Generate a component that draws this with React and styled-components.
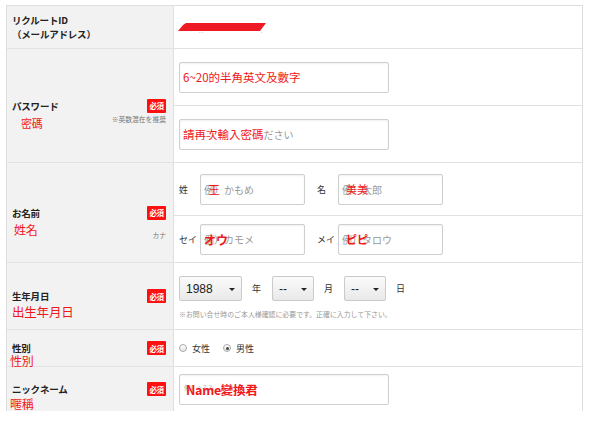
import React from 'react';
import styled, { createGlobalStyle } from 'styled-components';

const GlobalStyle = createGlobalStyle`
  html, body {
    margin: 0;
    padding: 0;
    background: #fff;
  }
  body {
    font-family: "Noto Sans CJK JP", "Noto Sans", sans-serif;
    color: #222;
  }
`;

const RED = '#f01818';

const Page = styled.div`
  width: 599px;
  height: 432px;
  padding: 5px 0 0 6px;
  box-sizing: border-box;
  overflow: hidden;
`;

const Table = styled.div`
  width: 577px;
  border: 1px solid #dedede;
  border-bottom: none;
  box-sizing: border-box;
`;

const Row = styled.div`
  display: grid;
  grid-template-columns: 167px 1fr;
  border-top: ${p => (p.first ? 'none' : '1px solid #e2e2e2')};
`;

const LabelCell = styled.div`
  display: flex;
  align-items: center;
  padding: 0 7px 0 5px;
  background: #f2f2f2;
  border-right: 1px solid #e0e0e0;
  min-height: ${p => p.h}px;
`;

const Title = styled.div`
  position: relative;
  flex: 1;
  font-size: 9.5px;
  font-weight: 700;
  line-height: 14px;
  color: #222;
  letter-spacing: -0.2px;
`;

const Annotation = styled.span`
  position: absolute;
  left: ${p => p.x}px;
  top: ${p => p.y}px;
  font-family: "Noto Sans CJK TC", "Noto Sans CJK JP", sans-serif;
  font-size: ${p => p.size || 12}px;
  font-weight: ${p => (p.bold ? 700 : 400)};
  color: ${RED};
  white-space: nowrap;
  line-height: 1;
`;

const BadgeWrap = styled.div`
  position: relative;
  display: flex;
  flex-direction: column;
  align-items: flex-end;
`;

const Badge = styled.span`
  display: inline-flex;
  align-items: center;
  justify-content: center;
  width: 19px;
  height: 14px;
  background: #ff1010;
  border-radius: 1px;
  color: #fff;
  font-size: 7.5px;
  font-weight: 700;
  letter-spacing: -0.5px;
`;

const Note = styled.span`
  position: absolute;
  right: 0;
  top: ${p => p.y}px;
  font-size: 6.8px;
  line-height: 10px;
  color: #777;
  white-space: nowrap;
`;

const ValueCell = styled.div`
  display: flex;
  flex-direction: column;
  background: #fff;
`;

const SubRow = styled.div`
  display: flex;
  align-items: center;
  height: ${p => p.h}px;
  padding-left: 5px;
  border-top: ${p => (p.divided ? '1px solid #e2e2e2' : 'none')};
`;

const FieldBox = styled.div`
  position: relative;
  display: flex;
  align-items: center;
  width: ${p => p.w}px;
  height: 31px;
  box-sizing: border-box;
  padding-left: 3px;
  border: 1px solid #cfcfcf;
  border-radius: 2px;
  box-shadow: inset 0 1px 2px rgba(0, 0, 0, 0.06);
  background: #fff;
  overflow: hidden;
`;

const Placeholder = styled.span`
  font-size: ${p => p.size || 10}px;
  color: #999;
  white-space: nowrap;
  margin-left: ${p => p.ml || 0}px;
`;

const TinyHint = styled.span`
  position: absolute;
  left: 4px;
  top: 8px;
  font-size: 6px;
  color: #aaa;
  white-space: nowrap;
`;

const FieldText = styled.span`
  position: relative;
  font-family: "Noto Sans CJK TC", "Noto Sans CJK JP", sans-serif;
  font-size: ${p => p.size || 12}px;
  font-weight: ${p => (p.bold ? 700 : 400)};
  color: ${RED};
  white-space: nowrap;
  letter-spacing: ${p => p.ls || 0}px;
  margin-left: ${p => p.ml || 0}px;
`;

const InlineLabel = styled.span`
  display: inline-block;
  width: ${p => p.w}px;
  font-size: 9px;
  color: #333;
`;

const NameGroup = styled.div`
  display: flex;
  align-items: center;
  margin-right: 12px;
`;

const Redact = styled.svg`
  display: block;
  margin-left: -2px;
`;

const BirthBlock = styled.div`
  display: flex;
  flex-direction: column;
  padding: 13px 0 0 5px;
  height: 66px;
  box-sizing: border-box;
`;

const SelectRow = styled.div`
  display: flex;
  align-items: center;
`;

const SelectBox = styled.div`
  position: relative;
  display: flex;
  align-items: center;
  width: ${p => p.w}px;
  height: 25px;
  box-sizing: border-box;
  padding-left: 6px;
  border: 1px solid #cacaca;
  border-radius: 2px;
  background: linear-gradient(#fbfbfb, #e9e9e9);
  font-family: "Liberation Sans", Arial, sans-serif;
  font-size: 12px;
  color: #222;

  &::after {
    content: '';
    position: absolute;
    right: 6px;
    top: 11px;
    border-left: 3px solid transparent;
    border-right: 3px solid transparent;
    border-top: 3px solid #222;
  }
`;

const Unit = styled.span`
  font-size: 9px;
  color: #333;
  margin: 0 11px 0 10px;
`;

const SmallNote = styled.div`
  margin-top: 8px;
  font-size: 6.9px;
  color: #999;
  white-space: nowrap;
`;

const RadioOption = styled.label`
  display: inline-flex;
  align-items: center;
  margin-right: 13px;
  font-size: 9px;
  color: #333;
`;

const RadioDot = styled.span`
  position: relative;
  width: 8px;
  height: 8px;
  box-sizing: border-box;
  margin-right: 5px;
  border: 1px solid #aaa;
  border-radius: 50%;
  background: linear-gradient(#fff, #e4e4e4);

  &::after {
    content: '';
    display: ${p => (p.checked ? 'block' : 'none')};
    position: absolute;
    left: 1.5px;
    top: 1.5px;
    width: 3px;
    height: 3px;
    border-radius: 50%;
    background: #444;
  }
`;

const Badged = ({ note, noteY }) => (
  <BadgeWrap>
    <Badge>必須</Badge>
    {note && <Note y={noteY}>{note}</Note>}
  </BadgeWrap>
);

const App = () => (
  <>
    <GlobalStyle />
    <Page>
      <Table>
        <Row first>
          <LabelCell h={42}>
            <Title>
              リクルートID
              <br />
              （メールアドレス）
            </Title>
          </LabelCell>
          <ValueCell>
            <SubRow h={42}>
              <Redact width="92" height="14" viewBox="0 0 92 14">
                <text x="22" y="13" fontSize="5" fill="#9aa">. .</text>
                <text x="84" y="13" fontSize="5" fill="#9aa">.</text>
                <polygon points="1,11 6,5 9,3 89,3 83,11" fill="#ee1b24" />
              </Redact>
            </SubRow>
          </ValueCell>
        </Row>

        <Row>
          <LabelCell h={113}>
            <Title>
              パスワード
              <Annotation x={9} y={19} size={11}>密碼</Annotation>
            </Title>
            <Badged note="※英数混在を推奨" noteY={15} />
          </LabelCell>
          <ValueCell>
            <SubRow h={56}>
              <FieldBox w={210}>
                <FieldText size={11.5}>6~20的半角英文及數字</FieldText>
              </FieldBox>
            </SubRow>
            <SubRow h={56} divided>
              <FieldBox w={210}>
                <FieldText size={11.5}>請再次輸入密碼</FieldText>
                <Placeholder>ださい</Placeholder>
              </FieldBox>
            </SubRow>
          </ValueCell>
        </Row>

        <Row>
          <LabelCell h={99}>
            <Title>
              お名前
              <Annotation x={2} y={18} size={12}>姓名</Annotation>
            </Title>
            <Badged note="カナ" noteY={24} />
          </LabelCell>
          <ValueCell>
            <SubRow h={52}>
              <NameGroup>
                <InlineLabel w={21}>姓</InlineLabel>
                <FieldBox w={105}>
                  <Placeholder>例）かもめ</Placeholder>
                  <Annotation x={7} y={9} size={12}>王</Annotation>
                </FieldBox>
              </NameGroup>
              <NameGroup>
                <InlineLabel w={21}>名</InlineLabel>
                <FieldBox w={105}>
                  <Placeholder>例）太郎</Placeholder>
                  <Annotation x={7} y={9} size={11}>美美</Annotation>
                </FieldBox>
              </NameGroup>
            </SubRow>
            <SubRow h={46} divided>
              <NameGroup>
                <InlineLabel w={21}>セイ</InlineLabel>
                <FieldBox w={105}>
                  <Placeholder>例）カモメ</Placeholder>
                  <Annotation x={3} y={9} size={12} bold>オウ</Annotation>
                </FieldBox>
              </NameGroup>
              <NameGroup>
                <InlineLabel w={21}>メイ</InlineLabel>
                <FieldBox w={105}>
                  <Placeholder>例）タロウ</Placeholder>
                  <Annotation x={7} y={9} size={11} bold>ピピ</Annotation>
                </FieldBox>
              </NameGroup>
            </SubRow>
          </ValueCell>
        </Row>

        <Row>
          <LabelCell h={66}>
            <Title>
              生年月日
              <Annotation x={0} y={17} size={12.5}>出生年月日</Annotation>
            </Title>
            <Badged />
          </LabelCell>
          <ValueCell>
            <BirthBlock>
              <SelectRow>
                <SelectBox w={63}>1988</SelectBox>
                <Unit>年</Unit>
                <SelectBox w={42}>--</SelectBox>
                <Unit>月</Unit>
                <SelectBox w={42}>--</SelectBox>
                <Unit>日</Unit>
              </SelectRow>
              <SmallNote>※お問い合せ時のご本人様確認に必要です。正確に入力して下さい。</SmallNote>
            </BirthBlock>
          </ValueCell>
        </Row>

        <Row>
          <LabelCell h={36}>
            <Title>
              性別
              <Annotation x={-2} y={14} size={12}>性別</Annotation>
            </Title>
            <Badged />
          </LabelCell>
          <ValueCell>
            <SubRow h={36}>
              <RadioOption>
                <RadioDot />
                女性
              </RadioOption>
              <RadioOption>
                <RadioDot checked />
                男性
              </RadioOption>
            </SubRow>
          </ValueCell>
        </Row>

        <Row>
          <LabelCell h={44}>
            <Title>
              ニックネーム
              <Annotation x={-2} y={16} size={12}>暱稱</Annotation>
            </Title>
            <Badged />
          </LabelCell>
          <ValueCell>
            <SubRow h={44}>
              <FieldBox w={210}>
                <TinyHint>例）ぐるみ</TinyHint>
                <FieldText size={12.5} bold ls={-0.3} ml={3}>Name變換君</FieldText>
              </FieldBox>
            </SubRow>
          </ValueCell>
        </Row>
      </Table>
    </Page>
  </>
);

export default App;
